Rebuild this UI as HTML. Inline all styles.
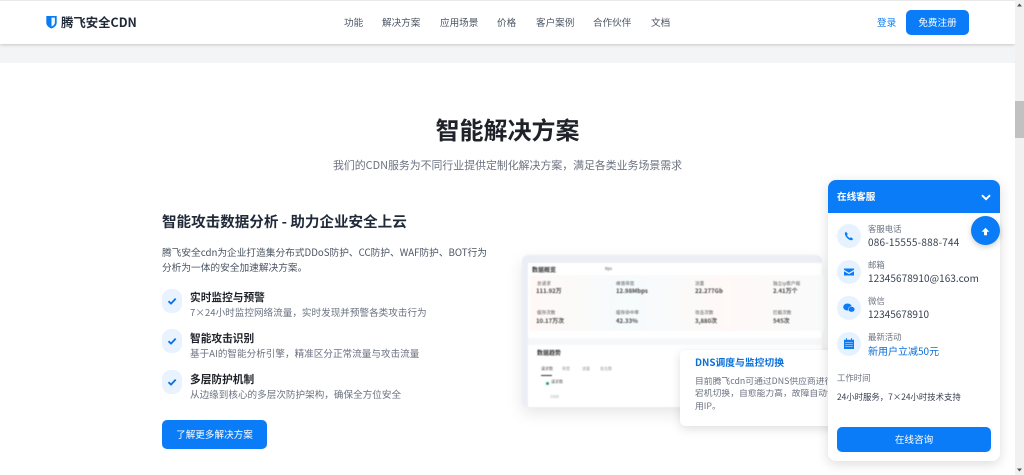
<!DOCTYPE html>
<html lang="zh"><head><meta charset="utf-8"><title>腾飞安全CDN</title>
<style>
*{margin:0;padding:0;box-sizing:border-box}
html,body{width:1024px;height:475px;overflow:hidden;background:#fff}
body{position:relative;font-family:"Noto Sans CJK SC","Liberation Sans",sans-serif;color:#1f2329;filter:blur(.25px)}
.a{position:absolute;white-space:nowrap;line-height:1}
.nav{font-size:9.6px;color:#4b5563;top:18px}
.ck{position:absolute;left:162px;width:20px;height:24px;border-radius:9px;background:#e8f3ff}
.ck svg,.ic svg{position:absolute}
.ft{left:190px;font-size:10.7px;font-weight:700;color:#1f2329}
.fd{left:190px;font-size:9.6px;color:#6b7280}
.ic{position:absolute;left:837px;width:24px;height:24px;border-radius:50%;background:#e6f2ff}
.l{left:868px;font-size:8.4px;color:#6b7280}
.v{left:868px;font-size:10px;color:#374151}
.sl{font-size:4.6px;color:#555}
.sv{font-size:6px;font-weight:700;color:#444}
.dash{position:absolute;left:0;top:0;width:1024px;height:475px;filter:blur(.4px)}
</style></head><body>
<div class="a" style="left:0;top:44px;width:1015px;height:19px;background:#f3f4f6"></div>
<div class="a" style="left:0;top:0;width:1015px;height:44px;background:#fff;box-shadow:0 1px 3px rgba(0,0,0,.18)"></div>
<div class="a" style="left:0;top:0;width:1015px;height:1px;background:#e9e9e9"></div>
<svg class="a" style="left:46px;top:15px" width="11" height="14" viewBox="0 0 11 14"><path d="M.3 1h10.400v6.500c0 3-2.400 5-5.200 6-2.800-1-5.200-3-5.200-6z" fill="#0a7cf0"/><path d="M5.500 2.600h3.400v4.800c0 1.900-1.500 3.300-3.400 4.100z" fill="#fff" opacity=".95"/></svg>
<div class="a" style="left:61px;top:16px;font-size:12.400px;font-weight:700;color:#1f2937">腾飞安全CDN</div>
<div class="a nav" style="left:344px">功能</div>
<div class="a nav" style="left:382px">解决方案</div>
<div class="a nav" style="left:440px">应用场景</div>
<div class="a nav" style="left:497px">价格</div>
<div class="a nav" style="left:536px">客户案例</div>
<div class="a nav" style="left:593px">合作伙伴</div>
<div class="a nav" style="left:651px">文档</div>
<div class="a nav" style="left:877px;color:#0a7cf0">登录</div>
<div class="a" style="left:906px;top:10px;width:63px;height:24.500px;border-radius:5px;background:#0a7cf8;color:#fff;font-size:9.600px;text-align:center;line-height:24.500px">免费注册</div>

<div class="a" style="left:0;width:1015px;text-align:center;top:117px;font-size:24px;font-weight:700;color:#1f2329">智能解决方案</div>
<div class="a" style="left:0;width:1015px;text-align:center;top:160px;font-size:10.900px;color:#6b7280">我们的CDN服务为不同行业提供定制化解决方案，满足各类业务场景需求</div>

<div class="a" style="left:162px;top:215px;font-size:14.550px;font-weight:700;color:#1f2937">智能攻击数据分析 - 助力企业安全上云</div>
<div class="a" style="left:162px;top:248px;font-size:9.700px;color:#4b5563">腾飞安全cdn为企业打造集分布式DDoS防护、CC防护、WAF防护、BOT行为</div>
<div class="a" style="left:162px;top:263px;font-size:9.700px;color:#4b5563">分析为一体的安全加速解决方案。</div>

<div class="ck" style="top:289px"><svg style="left:5px;top:7px" width="10" height="10" viewBox="0 0 10 10"><path d="M1.500 5.200 4 7.600 8.700 2.600" fill="none" stroke="#0a70e0" stroke-width="1.800"/></svg></div>
<div class="a ft" style="top:293px">实时监控与预警</div>
<div class="a fd" style="top:308px">7×24小时监控网络流量，实时发现并预警各类攻击行为</div>
<div class="ck" style="top:329px"><svg style="left:5px;top:7px" width="10" height="10" viewBox="0 0 10 10"><path d="M1.500 5.200 4 7.600 8.700 2.600" fill="none" stroke="#0a70e0" stroke-width="1.800"/></svg></div>
<div class="a ft" style="top:334px">智能攻击识别</div>
<div class="a fd" style="top:349px">基于AI的智能分析引擎，精准区分正常流量与攻击流量</div>
<div class="ck" style="top:370px"><svg style="left:5px;top:7px" width="10" height="10" viewBox="0 0 10 10"><path d="M1.500 5.200 4 7.600 8.700 2.600" fill="none" stroke="#0a70e0" stroke-width="1.800"/></svg></div>
<div class="a ft" style="top:375px">多层防护机制</div>
<div class="a fd" style="top:390px">从边缘到核心的多层次防护架构，确保全方位安全</div>
<div class="a" style="left:162px;top:420px;width:105px;height:29px;border-radius:5px;background:#0a7cf8;color:#fff;font-size:9.600px;text-align:center;line-height:29px">了解更多解决方案</div>

<div class="dash">
<div class="a" style="left:522px;top:255px;width:300px;height:152px;border-radius:6px;background:#eceef6;box-shadow:0 6px 16px rgba(0,0,0,.1)"></div>
<div class="a" style="left:528px;top:263px;width:294px;height:144px;background:#fff"></div>
<div class="a" style="left:530px;top:275px;width:294px;height:56px;background:linear-gradient(90deg,#fff9f6,#f6fbfd,#fff9f7,#f9fbfc)"></div>
<div class="a" style="left:528px;top:338px;width:294px;height:7px;background:#f6f7f9"></div>
<div class="a" style="left:532px;top:267px;font-size:6px;font-weight:700;color:#333">数据概览</div>
<div class="a sl" style="left:605px;top:267px;font-size:4px">Bps</div>
<div class="a sl" style="left:537px;top:282px">总请求</div><div class="a sv" style="left:536px;top:288px">111.92万</div>
<div class="a sl" style="left:616px;top:282px">峰值带宽</div><div class="a sv" style="left:616px;top:288px">12.98Mbps</div>
<div class="a sl" style="left:695px;top:282px">流量</div><div class="a sv" style="left:695px;top:288px">22.277Gb</div>
<div class="a sl" style="left:773px;top:282px">独立ip客户端</div><div class="a sv" style="left:773px;top:288px">2.41万个</div>
<div class="a sl" style="left:537px;top:311px">缓存次数</div><div class="a sv" style="left:536px;top:318px">10.17万次</div>
<div class="a sl" style="left:616px;top:311px">缓存命中率</div><div class="a sv" style="left:616px;top:318px">42.33%</div>
<div class="a sl" style="left:695px;top:311px">攻击次数</div><div class="a sv" style="left:695px;top:318px">3,880次</div>
<div class="a sl" style="left:773px;top:311px">拦截次数</div><div class="a sv" style="left:773px;top:318px">545次</div>
<div class="a" style="left:537px;top:350px;font-size:6px;font-weight:700;color:#333">数据趋势</div>
<div class="a sl" style="left:541px;top:367px;font-size:4px">请求数</div>
<div class="a" style="left:541px;top:375px;width:11px;height:1px;background:#333"></div>
<div class="a sl" style="left:562px;top:367px;font-size:4px;color:#999">带宽</div>
<div class="a sl" style="left:582px;top:367px;font-size:4px;color:#999">流量</div>
<div class="a sl" style="left:600px;top:367px;font-size:4px;color:#999">攻击数</div>
<div class="a" style="left:546px;top:382px;width:3px;height:3px;border-radius:50%;background:#1aa55a"></div>
<div class="a sl" style="left:551px;top:380px;font-size:4px">请求数</div>
<div class="a sl" style="left:550px;top:395px;font-size:4px;color:#aaa">1000</div>
</div>

<div class="a" style="left:680px;top:350px;width:160px;height:76px;border-radius:5px;background:#fff;box-shadow:0 3px 10px rgba(0,0,0,.13)"></div>
<div class="a" style="left:695px;top:358px;font-size:9.800px;font-weight:700;color:#0a6fd8">DNS调度与监控切换</div>
<div class="a" style="left:695px;top:377px;font-size:8.800px;color:#6b7280;width:133px;overflow:hidden">目前腾飞cdn可通过DNS供应商进行</div>
<div class="a" style="left:695px;top:389px;font-size:8.800px;color:#6b7280;width:133px;overflow:hidden">宕机切换，自愈能力高，故障自动切</div>
<div class="a" style="left:695px;top:402px;font-size:8.800px;color:#6b7280">用IP。</div>

<div class="a" style="left:1015px;top:0;width:9px;height:475px;background:#f1f1f1"></div>
<div class="a" style="left:1015px;top:101px;width:9px;height:37px;background:#c1c1c1"></div>
<svg class="a" style="left:1016px;top:3px" width="7" height="4" viewBox="0 0 7 4"><path d="M3.500 .5 6 3.500H1z" fill="#555"/></svg>
<svg class="a" style="left:1016px;top:468px" width="7" height="4" viewBox="0 0 7 4"><path d="M3.500 3.500 6 .5H1z" fill="#555"/></svg>

<div class="a" style="left:828px;top:180px;width:172px;height:281px;border-radius:8px;background:#fff;box-shadow:0 3px 12px rgba(0,0,0,.14)"></div>
<div class="a" style="left:828px;top:180px;width:172px;height:33px;border-radius:8px 8px 0 0;background:#0a7cf8"></div>
<div class="a" style="left:837px;top:192px;font-size:9.600px;font-weight:700;color:#fff">在线客服</div>
<svg class="a" style="left:981px;top:194px" width="10" height="7" viewBox="0 0 10 7"><path d="M1 1.200 5 5.200 9 1.200" fill="none" stroke="#fff" stroke-width="1.900"/></svg>
<div class="a" style="left:971px;top:216px;width:29px;height:29px;border-radius:50%;background:#0a7cf8;box-shadow:0 2px 6px rgba(0,0,0,.2)"></div>
<svg class="a" style="left:981px;top:226.500px" width="9" height="9" viewBox="0 0 9 9"><path d="M4.500.8 8.300 4.700H6v3.500H3V4.700H.7z" fill="#fff"/></svg>

<div class="ic" style="top:224px"><svg style="left:7px;top:7px" width="10" height="10" viewBox="0 0 10 10"><path d="M2 .8 3.800 3 3 4.300c.6 1.200 1.500 2.100 2.700 2.700L7 6.200 9.200 8 8 9.300C4.500 9.500.7 5.500.8 2z" fill="#0a7cf8"/></svg></div>
<div class="a l" style="top:225px">客服电话</div><div class="a v" style="top:237px;letter-spacing:.2px">086-15555-888-744</div>
<div class="ic" style="top:260px"><svg style="left:7px;top:7px" width="10" height="10" viewBox="0 0 10 10"><path d="M0 1.500h10v1.300L5 5.700 0 2.800zM0 4.200l5 2.900 5-2.900v4.300H0z" fill="#0a7cf8"/></svg></div>
<div class="a l" style="top:261px">邮箱</div><div class="a v" style="top:273px;letter-spacing:.05px">12345678910@163.com</div>
<div class="ic" style="top:296px"><svg style="left:6px;top:7px" width="12" height="10" viewBox="0 0 12 10"><ellipse cx="4.500" cy="4" rx="4.300" ry="3.500" fill="#0a7cf8"/><ellipse cx="8.500" cy="6.300" rx="3.300" ry="2.800" fill="#0a7cf8" stroke="#e8f3ff" stroke-width=".5"/></svg></div>
<div class="a l" style="top:297px">微信</div><div class="a v" style="top:309px">12345678910</div>
<div class="ic" style="top:332px"><svg style="left:7px;top:6px" width="10" height="11" viewBox="0 0 10 11"><path d="M0 1.800h10V11H0zM2 .3h1V3H2zM7 .3h1V3H7z" fill="#0a7cf8"/><path d="M1.200 4.500h7.600M1.200 6.500h7.600M1.200 8.500h7.600" stroke="#e8f3ff" stroke-width=".6"/></svg></div>
<div class="a l" style="top:333px">最新活动</div><div class="a v" style="top:346px;color:#0a6fd8">新用户立减50元</div>
<div class="a l" style="left:837px;top:374px">工作时间</div>
<div class="a" style="left:837px;top:393px;font-size:8.400px;color:#374151">24小时服务，7×24小时技术支持</div>
<div class="a" style="left:837px;top:427px;width:154px;height:25px;border-radius:5px;background:#0a7cf8;color:#fff;font-size:9.600px;text-align:center;line-height:25px">在线咨询</div>
</body></html>
